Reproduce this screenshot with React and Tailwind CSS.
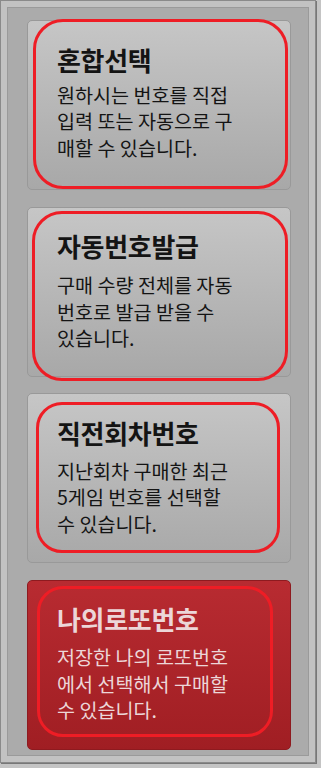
const cards = [
  {
    title: '혼합선택',
    lines: ['원하시는 번호를 직접', '입력 또는 자동으로 구', '매할 수 있습니다.'],
    ring: 'left-[5px] top-[-2px] right-[2px] bottom-[0px] rounded-[30px]',
    gap: 'mt-[7px]',
    red: false,
  },
  {
    title: '자동번호발급',
    lines: ['구매 수량 전체를 자동', '번호로 발급 받을 수', '있습니다.'],
    ring: 'left-[4px] top-[3px] right-[2px] bottom-[-5px] rounded-[30px]',
    gap: 'mt-[11px]',
    red: false,
  },
  {
    title: '직전회차번호',
    lines: ['지난회차 구매한 최근', '5게임 번호를 선택할', '수 있습니다.'],
    ring: 'left-[8px] top-[8px] right-[10px] bottom-[9px] rounded-[26px]',
    gap: 'mt-[10px]',
    red: false,
  },
  {
    title: '나의로또번호',
    lines: ['저장한 나의 로또번호', '에서 선택해서 구매할', '수 있습니다.'],
    ring: 'left-[9px] top-[5px] right-[17px] bottom-[12px] rounded-[26px]',
    gap: 'mt-[10px]',
    red: true,
  },
];

function Card({ card }) {
  const box = card.red
    ? 'border-[#8e1a1f] bg-gradient-to-b from-[#b82b31] to-[#a01e23] text-[#ecd6d8]'
    : 'border-[#999999] bg-gradient-to-b from-[#c6c6c6] to-[#a8a8a8] text-[#141414]';

  return (
    <div className={`relative h-[170px] w-[264px] rounded-[5px] border pl-[29px] pt-[23.5px] ${box}`}>
      <div className="text-[26px] font-bold leading-[30px] tracking-[-0.3px] whitespace-nowrap">{card.title}</div>
      <div className={`${card.gap} text-[19.6px] leading-[26.5px] whitespace-nowrap`}>
        {card.lines.map((l) => (
          <div key={l}>{l}</div>
        ))}
      </div>
      {/* red highlight ring drawn over the card */}
      <div className={`pointer-events-none absolute border-[3px] border-[#ee1d25] ${card.ring}`} />
    </div>
  );
}

export default function App() {
  return (
    <div
      className="h-[768px] w-[321px] bg-[#c4c4c4]"
      style={{ fontFamily: '"Noto Sans CJK KR", "Noto Sans", sans-serif' }}
    >
      <div className="h-[763px] w-[316px] border border-[#8a8a8a] bg-[#c2c2c2] p-[6px] shadow-[1px_1px_0_#777]">
        <div className="flex h-full flex-col gap-[16.5px] border border-[#9a9a9a] bg-[#ababab] pl-[19px] pt-[12px]">
          {cards.map((c) => (
            <Card key={c.title} card={c} />
          ))}
        </div>
      </div>
    </div>
  );
}
